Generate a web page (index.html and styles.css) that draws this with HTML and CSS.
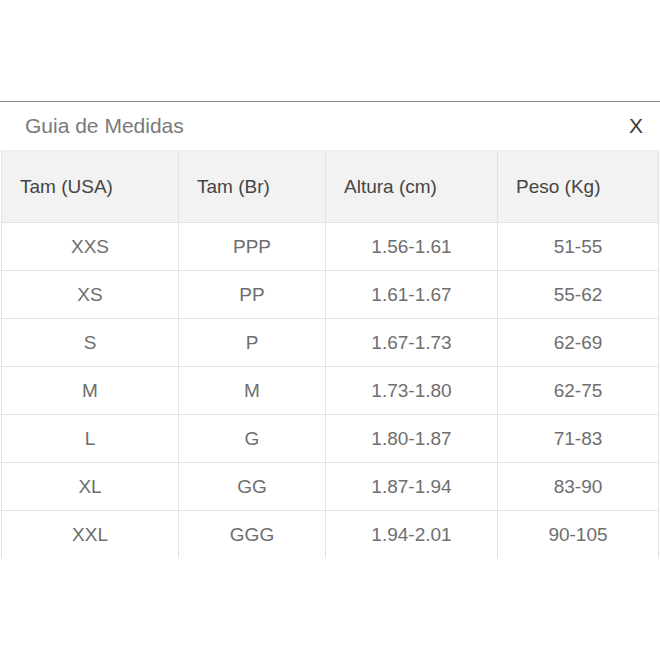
FILE: index.html
```html
<!DOCTYPE html>
<html lang="pt">
<head>
<meta charset="utf-8">
<title>Guia de Medidas</title>
<link rel="stylesheet" href="styles.css">
</head>
<body>
<div class="page">
  <div class="modal">
    <div class="modal-head">
      <span class="modal-title">Guia de Medidas</span>
      <span class="modal-close">X</span>
    </div>
    <table class="sizes">
      <colgroup>
        <col class="c1"><col class="c2"><col class="c3"><col class="c4">
      </colgroup>
      <thead>
        <tr><th>Tam (USA)</th><th>Tam (Br)</th><th>Altura (cm)</th><th>Peso (Kg)</th></tr>
      </thead>
      <tbody>
        <tr><td>XXS</td><td>PPP</td><td>1.56-1.61</td><td>51-55</td></tr>
        <tr><td>XS</td><td>PP</td><td>1.61-1.67</td><td>55-62</td></tr>
        <tr><td>S</td><td>P</td><td>1.67-1.73</td><td>62-69</td></tr>
        <tr><td>M</td><td>M</td><td>1.73-1.80</td><td>62-75</td></tr>
        <tr><td>L</td><td>G</td><td>1.80-1.87</td><td>71-83</td></tr>
        <tr><td>XL</td><td>GG</td><td>1.87-1.94</td><td>83-90</td></tr>
        <tr><td>XXL</td><td>GGG</td><td>1.94-2.01</td><td>90-105</td></tr>
      </tbody>
    </table>
  </div>
</div>
</body>
</html>
```

FILE: styles.css
```css
html, body {
  margin: 0;
  padding: 0;
  background: #ffffff;
}
body {
  font-family: "Liberation Sans", Arial, sans-serif;
  width: 660px;
  height: 660px;
  overflow: hidden;
}
.page {
  padding-top: 101px;
}
.modal {
  border-top: 1px solid #8f8f8f;
}
.modal-head {
  display: flex;
  align-items: center;
  justify-content: space-between;
  height: 48px;
  padding: 0 17px 0 25px;
}
.modal-title {
  font-size: 21px;
  color: #7a7a7a;
}
.modal-close {
  font-size: 21px;
  color: #3a3a3a;
}
.sizes {
  margin-left: 1px;
  width: 657px;
  table-layout: fixed;
  border-collapse: collapse;
}
.c1 { width: 177px; }
.c2 { width: 147px; }
.c3 { width: 172px; }
.c4 { width: 161px; }
.sizes th {
  height: 71px;
  padding: 0 0 0 18px;
  text-align: left;
  font-weight: normal;
  font-size: 19px;
  color: #454545;
  background: #f2f2f2;
  border: 1px solid #e2e2e2;
  border-top-color: #ececec;
}
.sizes td {
  height: 47px;
  padding: 0;
  text-align: center;
  font-size: 19px;
  color: #6e6e6e;
  border-left: 1px solid #e2e2e2;
  border-right: 1px solid #e2e2e2;
  border-top: 1px solid #e2e2e2;
}
```
